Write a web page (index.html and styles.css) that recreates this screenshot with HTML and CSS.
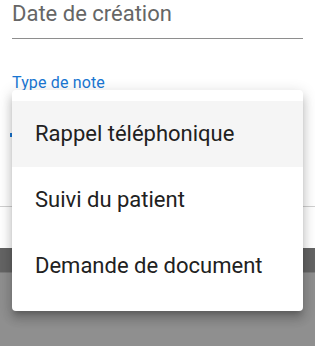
FILE: index.html
```html
<!DOCTYPE html>
<html lang="fr">
<head>
<meta charset="utf-8">
<link rel="stylesheet" href="styles.css">
</head>
<body>
<div class="sheet">
  <div class="form">
    <div class="field">
      <span class="placeholder">Date de création</span>
    </div>
    <div class="label">Type de note</div>
    <div class="select"><span class="caret"></span></div>
  </div>
  <div class="divider"></div>
</div>
<div class="backdrop">
  <div class="bar"></div>
  <div class="rest"></div>
</div>
<ul class="menu">
  <li class="item selected">Rappel téléphonique</li>
  <li class="item">Suivi du patient</li>
  <li class="item">Demande de document</li>
</ul>
</body>
</html>
```

FILE: styles.css
```css
html, body {
  margin: 0;
  padding: 0;
  height: 100%;
  overflow: hidden;
}
body {
  background: #ffffff;
  font-family: Roboto, "Noto Sans", sans-serif;
  position: relative;
}
.sheet {
  height: 248px;
  background: #ffffff;
}
.form {
  padding: 0 12px;
}
.field {
  padding: 2px 0 12px;
  border-bottom: 1px solid #8e8e8e;
}
.placeholder {
  display: block;
  font-size: 22px;
  line-height: 24px;
  color: #666666;
}
.label {
  margin-top: 35px;
  font-size: 16px;
  line-height: 18px;
  letter-spacing: 0.15px;
  color: #1976d2;
}
.select {
  height: 73px;
  position: relative;
}
.caret {
  display: block;
  width: 2px;
  height: 4px;
  margin: 41px 0 0 -2px;
  background: #1976d2;
}
.divider {
  height: 1px;
  background: #d0d0d0;
}
.backdrop {
  height: 98px;
  display: flex;
  flex-direction: column;
}
.bar {
  height: 24px;
  background: #646464;
  border-bottom: 1px solid #7b7b7b;
}
.rest {
  flex: 1;
  background: #8f8f8f;
}
.menu {
  position: absolute;
  top: 90px;
  left: 12px;
  width: 291px;
  margin: 0;
  padding: 11px 0 12px;
  list-style: none;
  background: #ffffff;
  border-radius: 4px;
  box-shadow: 0 5px 5px -3px rgba(0,0,0,0.2), 0 8px 10px 1px rgba(0,0,0,0.14), 0 3px 14px 2px rgba(0,0,0,0.12);
}
.item {
  height: 66px;
  line-height: 66px;
  padding-left: 23px;
  font-size: 22px;
  color: #212121;
}
.item.selected {
  background: #f5f5f5;
}
```
